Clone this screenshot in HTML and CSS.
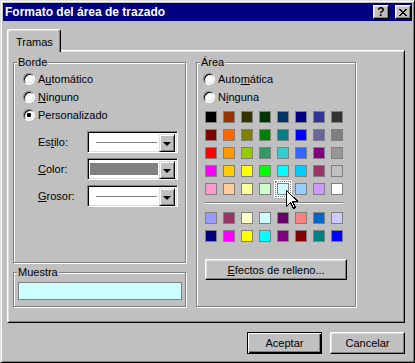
FILE: index.html
```html
<!DOCTYPE html>
<html lang="es">
<head>
  <meta charset="UTF-8" />
  <title>Formato del área de trazado</title>
  <link rel="stylesheet" href="styles.css">
</head>
<body>
  <div class="window">
    <div class="titlebar">
      <span class="title">Formato del área de trazado</span>
      <div class="caption-buttons">
        <button class="cap-btn">?</button>
        <button class="cap-btn">
          <svg width="8" height="7" viewBox="0 0 8 7" shape-rendering="crispEdges">
            <path d="M0 0h2v1h-2zM6 0h2v1h-2zM1 1h2v1h-2zM5 1h2v1h-2zM2 2h4v1h-4zM3 3h2v1h-2zM2 4h4v1h-4zM1 5h2v1h-2zM5 5h2v1h-2zM0 6h2v1h-2zM6 6h2v1h-2z" fill="#000"/>
          </svg>
        </button>
      </div>
    </div>

    <div class="body">
      <div class="tabs">
        <div class="tab">Tramas</div>
      </div>

      <div class="panel">
        <div class="col-left">
          <div class="group borde">
            <span class="group-title">Borde</span>
            <div class="radio"><span class="radio-mark"></span><span>A<u>u</u>tomático</span></div>
            <div class="radio"><span class="radio-mark"></span><span><u>N</u>inguno</span></div>
            <div class="radio"><span class="radio-mark checked"></span><span>Personalizado</span></div>

            <div class="fields">
              <div class="field">
                <span class="field-label">Es<u>t</u>ilo:</span>
                <div class="combo">
                  <div class="combo-value"><span class="line-sample"></span></div>
                  <span class="combo-btn"></span>
                </div>
              </div>
              <div class="field">
                <span class="field-label"><u>C</u>olor:</span>
                <div class="combo">
                  <div class="combo-value"><span class="color-sample"></span></div>
                  <span class="combo-btn"></span>
                </div>
              </div>
              <div class="field">
                <span class="field-label"><u>G</u>rosor:</span>
                <div class="combo">
                  <div class="combo-value"><span class="line-sample"></span></div>
                  <span class="combo-btn"></span>
                </div>
              </div>
            </div>
          </div>

          <div class="group muestra">
            <span class="group-title">Muestra</span>
            <div class="sample"></div>
          </div>
        </div>

        <div class="group area">
          <span class="group-title">Área</span>
          <div class="radio"><span class="radio-mark"></span><span>Auto<u>m</u>ática</span></div>
          <div class="radio"><span class="radio-mark"></span><span>N<u>i</u>nguna</span></div>

          <div class="palette">
            <div class="swatches" id="main-colors"></div>
            <div class="separator"></div>
            <div class="swatches" id="chart-colors"></div>
            <svg class="cursor" width="12" height="19" viewBox="0 0 12 19" shape-rendering="crispEdges">
              <path d="M0.5 0.5v16l4-4 3 6 2-1-3-6h5.5z" fill="#fff" stroke="#000"/>
            </svg>
          </div>

          <button class="btn effects"><u>E</u>fectos de relleno...</button>
        </div>
      </div>

      <div class="actions">
        <button class="btn default">Aceptar</button>
        <button class="btn">Cancelar</button>
      </div>
    </div>
  </div>

  <script>
    const mainColors = [
      '#000000', '#993300', '#333300', '#003300', '#003366', '#000080', '#333399', '#333333',
      '#800000', '#ff6600', '#808000', '#008000', '#008080', '#0000ff', '#666699', '#808080',
      '#ff0000', '#ff9900', '#99cc00', '#339966', '#33cccc', '#3366ff', '#800080', '#969696',
      '#ff00ff', '#ffcc00', '#ffff00', '#00ff00', '#00ffff', '#00ccff', '#993366', '#c0c0c0',
      '#ff99cc', '#ffcc99', '#ffff99', '#ccffcc', '#ccffff', '#99ccff', '#cc99ff', '#ffffff'
    ];
    const chartColors = [
      '#9999ff', '#993366', '#ffffcc', '#ccffff', '#660066', '#ff8080', '#0066cc', '#ccccff',
      '#000080', '#ff00ff', '#ffff00', '#00ffff', '#800080', '#800000', '#008080', '#0000ff'
    ];
    const selectedIndex = 36;

    function fillSwatches(id, colors, selected) {
      const box = document.getElementById(id);
      colors.forEach((color, i) => {
        const swatch = document.createElement('span');
        swatch.className = i === selected ? 'swatch selected' : 'swatch';
        swatch.style.background = color;
        box.appendChild(swatch);
      });
    }

    fillSwatches('main-colors', mainColors, selectedIndex);
    fillSwatches('chart-colors', chartColors, -1);
  </script>
</body>
</html>
```

FILE: styles.css
```css
* {
  box-sizing: border-box;
}

body {
  margin: 0;
  font-family: "Liberation Sans", Arial, sans-serif;
  font-size: 11px;
  color: #000;
  background: #c0c0c0;
}

u {
  text-decoration-thickness: 1px;
  text-underline-offset: 1px;
}

.window {
  width: 415px;
  height: 363px;
  display: flex;
  flex-direction: column;
  padding: 2px;
  background: #c0c0c0;
  border: 1px solid;
  border-color: #dfdfdf #000 #000 #dfdfdf;
  box-shadow: inset 1px 1px 0 #fff, inset -1px -1px 0 #808080;
}

.titlebar {
  height: 18px;
  display: flex;
  align-items: center;
  justify-content: space-between;
  padding: 0 1px 0 2px;
  background: #000080;
  color: #fff;
}

.title {
  font-weight: bold;
  font-size: 12px;
}

.caption-buttons {
  display: flex;
  gap: 6px;
}

.cap-btn {
  width: 16px;
  height: 14px;
  padding: 0;
  display: flex;
  align-items: center;
  justify-content: center;
  font: bold 12px "Liberation Sans", Arial, sans-serif;
  color: #000;
  background: #c0c0c0;
  border: 1px solid;
  border-color: #fff #000 #000 #fff;
  box-shadow: inset -1px -1px 0 #808080, inset 1px 1px 0 #dfdfdf;
}

.body {
  flex: 1;
  display: flex;
  flex-direction: column;
  padding: 8px 7px 6px 4px;
}

/* tab strip */
.tabs {
  display: flex;
  height: 21px;
}

.tab {
  position: relative;
  z-index: 1;
  width: 54px;
  height: 23px;
  padding: 6px 0 0 8px;
  background: #c0c0c0;
  border: 1px solid;
  border-color: #fff #000 transparent #fff;
  border-bottom: none;
  border-radius: 3px 3px 0 0;
  box-shadow: inset -1px 0 0 #808080, inset 1px 1px 0 #dfdfdf;
}

.panel {
  height: 273px;
  display: flex;
  gap: 10px;
  padding: 11px 0 0 5px;
  border: 1px solid;
  border-color: #fff #000 #000 #fff;
  box-shadow: inset 1px 1px 0 #dfdfdf, inset -1px -1px 0 #808080;
}

.col-left {
  width: 173px;
  display: flex;
  flex-direction: column;
  gap: 9px;
}

/* etched group boxes */
.group {
  border: 1px solid #808080;
  box-shadow: inset 1px 1px 0 #fff, 1px 1px 0 #fff;
}

.group-title {
  display: block;
  width: max-content;
  margin: -7px 0 0 3px;
  padding: 0 1px;
  line-height: 13px;
  background: #c0c0c0;
}

.borde {
  height: 201px;
}

.muestra {
  height: 35px;
}

.area {
  width: 160px;
  height: 245px;
}

.radio {
  height: 18px;
  display: flex;
  align-items: center;
  gap: 3px;
}

.borde .radio {
  padding-left: 9px;
}

.group-title + .radio {
  margin-top: 1px;
}

.area .radio {
  padding-left: 6px;
}

.radio-mark {
  width: 12px;
  height: 12px;
  display: flex;
  align-items: center;
  justify-content: center;
  border-radius: 50%;
  background: #fff;
  border: 1px solid;
  border-color: #808080 #fff #fff #808080;
  box-shadow: inset 1px 1px 0 #000, inset -1px -1px 0 #dfdfdf;
}

.radio-mark.checked::after {
  content: "";
  width: 4px;
  height: 4px;
  border-radius: 1px;
  background: #000;
}

.fields {
  display: flex;
  flex-direction: column;
  gap: 5px;
  margin-top: 7px;
  padding-left: 24px;
}

.field {
  display: flex;
  align-items: center;
}

.field-label {
  width: 49px;
}

.combo {
  width: 91px;
  height: 22px;
  display: flex;
  padding: 2px;
  background: #fff;
  border: 1px solid;
  border-color: #808080 #fff #fff #808080;
  box-shadow: inset 1px 1px 0 #000, inset -1px -1px 0 #dfdfdf;
}

.combo-value {
  flex: 1;
  display: flex;
  align-items: center;
  padding-left: 6px;
}

.line-sample {
  width: 61px;
  height: 1px;
  background: #808080;
}

.combo-value:has(.color-sample) {
  padding: 2px 1px 2px 0;
}

.color-sample {
  width: 100%;
  height: 100%;
  background: #808080;
}

.combo-btn {
  width: 16px;
  height: 18px;
  display: flex;
  align-items: center;
  justify-content: center;
  background: #c0c0c0;
  border: 1px solid;
  border-color: #dfdfdf #000 #000 #dfdfdf;
  box-shadow: inset 1px 1px 0 #fff, inset -1px -1px 0 #808080;
}

.combo-btn::after {
  content: "";
  border-left: 4px solid transparent;
  border-right: 4px solid transparent;
  border-top: 4px solid #000;
  margin-top: 1px;
}

.sample {
  width: 164px;
  height: 18px;
  margin: 3px 0 0 4px;
  background: #ccffff;
  border: 1px solid #808080;
}

/* colour palette */
.palette {
  position: relative;
  width: 138px;
  margin: 5px 0 0 8px;
}

.swatches {
  display: grid;
  grid-template-columns: repeat(8, 12px);
  gap: 6px;
}

.swatch {
  width: 12px;
  height: 12px;
  border: 1px solid #808080;
}

.swatch.selected {
  outline: 1px dotted #808080;
  outline-offset: 1px;
  box-shadow: 0 0 0 3px #fff;
}

.separator {
  height: 2px;
  margin: 7px 0 8px;
  border-top: 1px solid #808080;
  border-bottom: 1px solid #fff;
}

.cursor {
  position: absolute;
  left: 81px;
  top: 79px;
}

.btn {
  height: 22px;
  padding: 0;
  font: inherit;
  color: #000;
  background: #c0c0c0;
  border: 1px solid;
  border-color: #fff #000 #000 #fff;
  box-shadow: inset -1px -1px 0 #808080, inset 1px 1px 0 #dfdfdf;
}

.btn.default {
  border-color: #000;
  box-shadow: inset 1px 1px 0 #fff, inset -1px -1px 0 #000, inset -2px -2px 0 #808080;
}

.effects {
  width: 142px;
  height: 21px;
  margin: 17px 0 0 8px;
}

.actions {
  display: flex;
  justify-content: flex-end;
  gap: 8px;
  margin-top: 9px;
}

.actions .btn {
  width: 75px;
}
```
